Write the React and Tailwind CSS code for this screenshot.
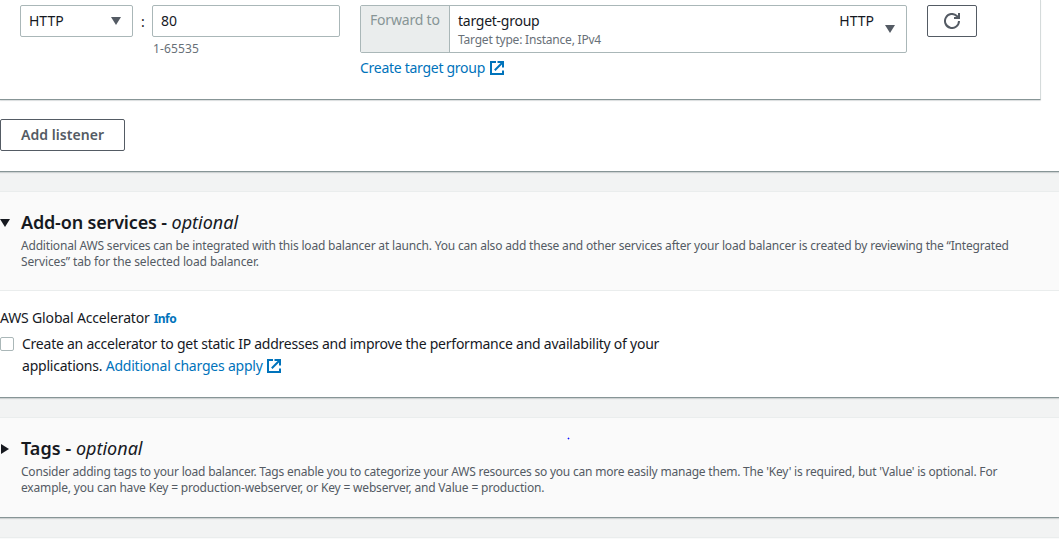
function ExternalIcon() {
  return (
    <svg className="size-3.5 shrink-0" viewBox="0 0 14 14" fill="none" stroke="#0073bb" strokeWidth="2">
      <path d="M6 1H1v12h12V9.500" />
      <path d="M7.500 1H13v5.500M12.500 1.500L4.800 9.200" />
    </svg>
  );
}

function Caret({ className }) {
  return (
    <svg className={className} width="10" height="8" viewBox="0 0 10 8" fill="currentColor">
      <path d="M0 0h10L5 8z" />
    </svg>
  );
}

function SectionHeading({ icon, title, children }) {
  return (
    <div className="flex">
      <div className="w-[21px] shrink-0 text-[#16191f]">{icon}</div>
      <div>
        <h2 className="text-[18px] leading-[22px] font-semibold whitespace-nowrap text-[#16191f]">
          {title} <span className="font-normal italic tracking-normal">optional</span>
        </h2>
        <p className="mt-[5px] text-[12px] leading-4 whitespace-nowrap text-[#545b64]">{children}</p>
      </div>
    </div>
  );
}

export default function App() {
  return (
    <div className="relative h-[539px] w-[1059px] overflow-hidden bg-[#f2f3f3] font-['Noto_Sans',sans-serif] text-[14px] leading-[22px] text-[#16191f]">
      <section className="h-[172px] border-b border-[#879596] bg-white shadow-[0_1px_1px_0_rgba(0,28,36,0.15)]">
        <div className="flex h-[100px] w-[1041px] items-start rounded-br-[1px] border-r border-b border-r-[#d5dbdb] border-b-[#879596] pt-[5px] pl-5 shadow-[0_1px_1px_0_rgba(0,28,36,0.15)]">
          <div className="flex h-8 w-[113px] items-center justify-between rounded-[2px] border border-[#aab7b8] pr-[11px] pl-2">
            <span>HTTP</span>
            <Caret className="text-[#545b64]" />
          </div>
          <span className="w-[19px] pt-1.5 pl-px text-center leading-[22px]">:</span>
          <div className="w-[188px]">
            <div className="flex h-8 items-center rounded-[2px] border border-[#aab7b8] pl-2">80</div>
            <p className="mt-1 pl-px text-[12px] leading-4 tracking-[0.15px] text-[#687078]">1-65535</p>
          </div>
          <div className="ml-5 w-[547px]">
            <div className="flex h-12 rounded-[2px] border border-[#aab7b8]">
              <div className="w-[89px] border-r border-[#aab7b8] bg-[#eaeded] pt-[3px] pl-[9px] tracking-[-0.2px] whitespace-nowrap text-[#879596]">Forward to</div>
              <div className="flex-1 pt-1 pl-2">
                <div className="tracking-[-0.25px]">target-group</div>
                <div className="text-[12px] leading-4 tracking-[-0.21px] text-[#687078]">Target type: Instance, IPv4</div>
              </div>
              <div className="pt-1">HTTP</div>
              <Caret className="mt-[19px] mr-[11px] ml-[11px] text-[#545b64]" />
            </div>
            <div className="mt-1 flex items-center gap-[5px] text-[#0073bb]">
              <span className="tracking-[-0.28px]">Create target group</span>
              <ExternalIcon />
            </div>
          </div>
          <div className="ml-5 flex h-8 w-[50px] items-center justify-center rounded-[2px] border border-[#545b64]">
            <svg width="16" height="16" viewBox="0 0 16 16" fill="none" stroke="#545b64" strokeWidth="2">
              <path d="M15 8a7 7 0 1 1-2.200-5.100L14.500 5M15 0v5h-5" />
            </svg>
          </div>
        </div>
        <div className="mt-[19px] flex h-8 w-[125px] items-center justify-center rounded-[2px] border border-[#545b64] font-semibold tracking-[0.05px] text-[#545b64]">
          <span>Add listener</span>
        </div>
      </section>

      <section className="mt-[19px] h-[207px] border-b border-[#879596] bg-white shadow-[0_1px_1px_0_rgba(0,28,36,0.15)]">
        <div className="h-[100px] border-y border-[#eaeded] bg-[#fafafa] pt-[19px]">
          <SectionHeading
            icon={<Caret className="mt-2" />}
            title={<span className="tracking-[-0.17px]">Add-on services -</span>}
          >
            <span className="tracking-[-0.187px]">Additional AWS services can be integrated with this load balancer at launch. You can also add these and other services after your load balancer is created by reviewing the “Integrated</span>
            <br />
            <span className="tracking-[-0.12px]">Services” tab for the selected load balancer.</span>
          </SectionHeading>
        </div>
        <div className="flex items-baseline gap-1 pt-4 whitespace-nowrap">
          <span className="tracking-[-0.16px]">AWS Global Accelerator</span>
          <span className="text-[12px] font-bold tracking-[-0.5px] text-[#0073bb]">Info</span>
        </div>
        <div className="mt-[3px] flex gap-2">
          <div className="mt-1 size-3.5 shrink-0 rounded-[2px] border border-[#aab7b8]" />
          <div className="whitespace-nowrap">
            <div className="tracking-[-0.242px]">Create an accelerator to get static IP addresses and improve the performance and availability of your</div>
            <div className="flex items-center gap-1">
              <span className="tracking-[-0.22px]">applications. <span className="text-[#0073bb]">Additional charges apply</span></span>
              <ExternalIcon />
            </div>
          </div>
        </div>
      </section>

      <section className="mt-[19px] h-[101px] border-t border-b border-t-[#eaeded] border-b-[#879596] bg-[#fafafa] pt-[19px] shadow-[0_1px_1px_0_rgba(0,28,36,0.15)]">
        <SectionHeading
          icon={
            <svg className="mt-[7px] ml-px" width="8" height="10" viewBox="0 0 8 10" fill="currentColor">
              <path d="M0 0v10l8-5z" />
            </svg>
          }
          title={<span className="tracking-[0.05px]">Tags -</span>}
        >
          <span className="tracking-[-0.21px]">Consider adding tags to your load balancer. Tags enable you to categorize your AWS resources so you can more easily manage them. The 'Key' is required, but 'Value' is optional. For</span>
          <br />
          <span className="tracking-[-0.175px]">example, you can have Key = production-webserver, or Key = webserver, and Value = production.</span>
        </SectionHeading>
      </section>
      <div className="mt-[19px] h-[2px] border-t border-[#eaeded] bg-[#fafafa]" />
      <svg className="absolute top-[437px] left-[567px]" width="3" height="3" viewBox="0 0 3 3">
        <path d="M1 0h1v3H1zM0 1h3v1H0z" fill="#2020ff" fillOpacity="0.35" />
        <path d="M1 1h1v1H1z" fill="#1010ff" />
      </svg>
    </div>
  );
}
